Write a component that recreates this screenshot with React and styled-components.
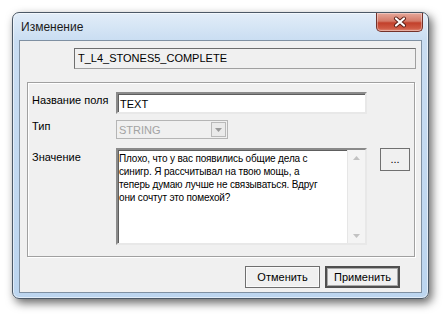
import styled, { createGlobalStyle } from 'styled-components'

const GlobalStyle = createGlobalStyle`
  html, body {
    margin: 0;
    padding: 0;
    background: #ffffff;
  }
  body {
    font-family: "Liberation Sans", Arial, sans-serif;
    font-size: 11px;
    color: #000;
  }
`

const Page = styled.div`
  width: 448px;
  height: 316px;
  padding: 12px 0 0 12px;
  box-sizing: border-box;
  overflow: hidden;
`

const Window = styled.div`
  width: 417px;
  height: 287px;
  box-sizing: border-box;
  border: 1px solid #4b5866;
  border-radius: 7px;
  background: linear-gradient(#e2edf8, #c9ddf2 28px, #bcd5ef);
  box-shadow: inset 0 0 0 1px rgba(255, 255, 255, 0.55), 3px 4px 10px rgba(0, 0, 0, 0.6);
  padding: 0 6px 5px 6px;
  display: flex;
  flex-direction: column;
`

const TitleBar = styled.div`
  height: 27px;
  display: flex;
  justify-content: space-between;
  align-items: flex-start;
  padding-left: 2px;
`

const Title = styled.div`
  font-size: 12px;
  line-height: 15px;
  padding-top: 7px;
  color: #1a1a1a;
`

const CloseButton = styled.div`
  width: 47px;
  height: 19px;
  box-sizing: border-box;
  margin-right: -1px;
  border: 1px solid #74322a;
  border-top: none;
  border-radius: 0 0 5px 5px;
  background: linear-gradient(#e6a89b, #d47a68 45%, #c2402b 55%, #cf5a44 85%, #e08c78);
  box-shadow: inset 0 0 0 1px rgba(255, 255, 255, 0.35);
  display: flex;
  align-items: center;
  justify-content: center;
`

const Client = styled.div`
  flex: 1;
  border: 1px solid #7f90a2;
  background: #f0f0f0;
  display: flex;
  flex-direction: column;
`

const NameBox = styled.div`
  margin: 7px 0 0 54px;
  width: 342px;
  height: 21px;
  box-sizing: border-box;
  border: 1px solid #a0a0a0;
  border-top-color: #6e6e6e;
  border-left-color: #6e6e6e;
  padding: 3px 0 0 3px;
  line-height: 13px;
`

const Group = styled.div`
  margin: 13px 0 0 7px;
  width: 388px;
  height: 175px;
  box-sizing: border-box;
  border: 1px solid #a0a0a0;
  box-shadow: 1px 1px 0 #ffffff, inset 1px 1px 0 #ffffff;
  padding: 9px 0 0 4px;
  display: grid;
  grid-template-columns: 84px 251px 13px 30px;
  grid-template-rows: 28px 28px 97px;
`

const Label = styled.div`
  grid-column: 1;
  padding-top: ${p => p.$pad}px;
  line-height: 13px;
  white-space: nowrap;
`

const Sunken = styled.div`
  box-sizing: border-box;
  border: 2px solid;
  border-color: #8a8a8a #e8e8e8 #e8e8e8 #8a8a8a;
  box-shadow: inset 1px 1px 0 #5e5e5e;
  background: #ffffff;
`

const TextInput = styled(Sunken)`
  grid-column: 2;
  height: 22px;
  padding: 3px 0 0 2px;
  font-size: 11px;
  line-height: 14px;
`

const Select = styled.div`
  grid-column: 2;
  width: 112px;
  height: 19px;
  box-sizing: border-box;
  border: 1px solid #b5b5b5;
  background: #f0f0f0;
  color: #a3a3a3;
  font-size: 11px;
  display: flex;
  align-items: center;
  justify-content: space-between;
  padding: 1px 1px 1px 2px;
`

const SelectArrow = styled.div`
  width: 15px;
  height: 15px;
  box-sizing: border-box;
  border: 1px solid #b9b9b9;
  background: #eaeaea;
  display: flex;
  align-items: center;
  justify-content: center;
`

const TextArea = styled(Sunken)`
  grid-column: 2;
  height: 97px;
  display: flex;
`

const AreaText = styled.div`
  flex: 1;
  padding: 2px 0 0 1px;
  line-height: 13px;
  font-size: 10px;
  letter-spacing: -0.15px;
  white-space: nowrap;
`

const ScrollBar = styled.div`
  width: 17px;
  background: #f4f4f4;
  border-left: 1px solid #e6e6e6;
  display: flex;
  flex-direction: column;
  justify-content: space-between;
  align-items: center;
  padding: 6px 0 5px;
`

const SmallButton = styled.div`
  grid-column: 4;
  height: 23px;
  box-sizing: border-box;
  border: 1px solid #707070;
  background: #f0f0f0;
  display: flex;
  align-items: flex-start;
  justify-content: center;
  padding-top: 4px;
  line-height: 13px;
`

const ButtonRow = styled.div`
  display: flex;
  justify-content: flex-end;
  gap: 5px;
  margin: 9px 21px 0 0;
`

const Button = styled.div`
  width: 75px;
  height: 22px;
  box-sizing: border-box;
  border: ${p => (p.$default ? '2px solid #4f4f4f' : '1px solid #6f6f6f')};
  box-shadow: ${p => (p.$default ? 'inset 0 0 0 1px #a8a8a8' : 'inset 0 0 0 1px #fafafa')};
  background: #f0f0f0;
  display: flex;
  align-items: center;
  justify-content: center;
  font-size: 11px;
`

const Triangle = ({ down, color = '#a8a8a8' }) => (
  <svg width="7" height="4" viewBox="0 0 7 4">
    <path d={down ? 'M0 0 H7 L3.5 4 Z' : 'M0 4 H7 L3.5 0 Z'} fill={color} />
  </svg>
)

const App = () => {
  return (
    <Page>
      <GlobalStyle />
      <Window>
        <TitleBar>
          <Title>Изменение</Title>
          <CloseButton>
            <svg width="14" height="12" viewBox="0 0 14 12">
              <path d="M3 2.5 L11 9.5 M11 2.5 L3 9.5" stroke="#5a1e16" strokeWidth="4" strokeLinecap="round" />
              <path d="M3 2.5 L11 9.5 M11 2.5 L3 9.5" stroke="#ffffff" strokeWidth="2.2" strokeLinecap="round" />
            </svg>
          </CloseButton>
        </TitleBar>
        <Client>
          <NameBox>T_L4_STONES5_COMPLETE</NameBox>
          <Group>
            <Label $pad={2}>Название поля</Label>
            <TextInput>TEXT</TextInput>
            <Label $pad={0}>Тип</Label>
            <Select>
              STRING
              <SelectArrow>
                <Triangle down color="#9a9a9a" />
              </SelectArrow>
            </Select>
            <Label $pad={3}>Значение</Label>
            <TextArea>
              <AreaText>
                Плохо, что у вас появились общие дела с<br />
                синигр. Я рассчитывал на твою мощь, а<br />
                теперь думаю лучше не связываться. Вдруг<br />
                они сочтут это помехой?
              </AreaText>
              <ScrollBar>
                <Triangle color="#c2c2c2" />
                <Triangle down color="#c2c2c2" />
              </ScrollBar>
            </TextArea>
            <SmallButton>...</SmallButton>
          </Group>
          <ButtonRow>
            <Button>Отменить</Button>
            <Button $default>Применить</Button>
          </ButtonRow>
        </Client>
      </Window>
    </Page>
  )
}

export default App
